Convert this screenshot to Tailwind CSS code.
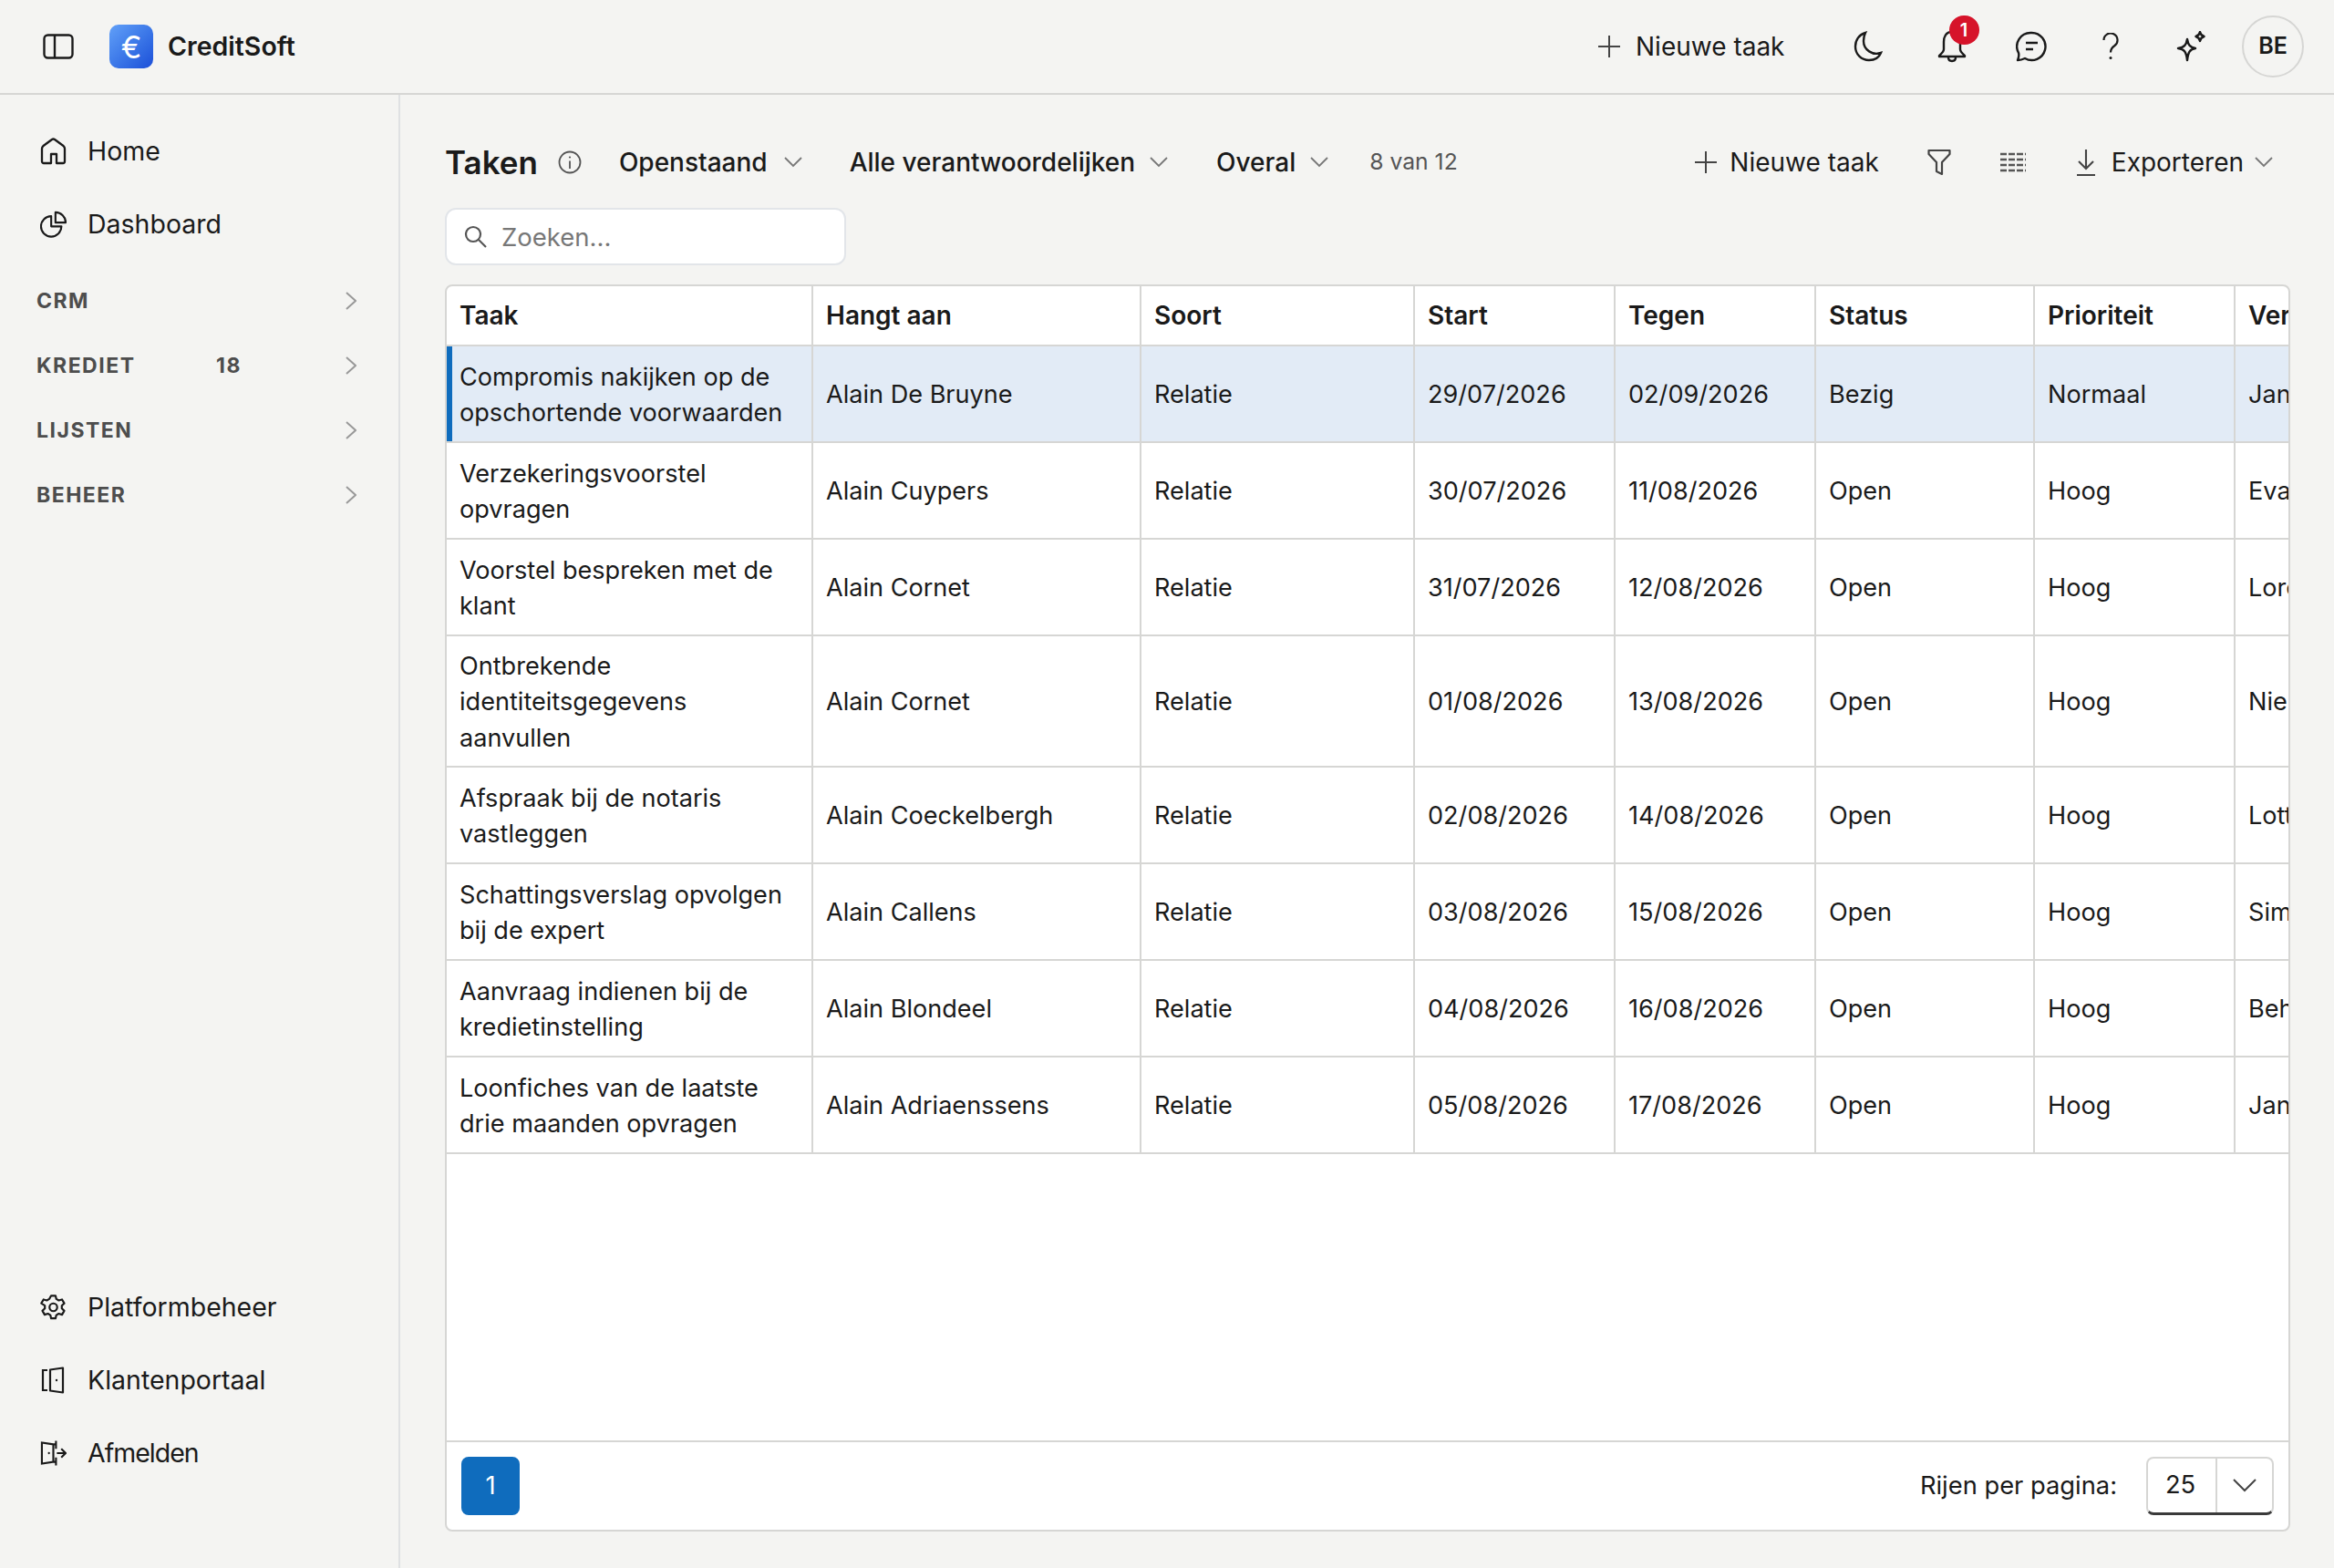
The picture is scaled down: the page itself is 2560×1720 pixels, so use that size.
<!DOCTYPE html>
<html lang="nl">
<head>
  <meta charset="UTF-8" />
  <title>CreditSoft - Taken</title>
  <script src="https://cdn.jsdelivr.net/npm/@tailwindcss/browser@4"></script>
</head>
<body class="bg-[#f4f4f2] font-['Inter',sans-serif] text-[#1a1a1a] text-[28px] w-[2560px] h-[1720px] overflow-hidden">

  <!-- topbar -->
  <header class="h-[104px] border-b-2 border-[#d6d6d4] flex items-center pl-[47px] pr-[33px]">
    <svg class="w-[34px] h-[28px]" viewBox="0 0 34 28" fill="none" stroke="#1a1a1a" stroke-width="2.4"><rect x="1.5" y="1.5" width="31" height="25" rx="4"/><path d="M13 1.5v25"/></svg>
    <div class="ml-[39px] w-[48px] h-[48px] rounded-[10px] bg-gradient-to-br from-[#62a0f8] to-[#1d4ed8] flex items-center justify-center text-white text-[34px] font-normal">€</div>
    <span class="ml-[16px] text-[28.500px] font-semibold">CreditSoft</span>
    <div class="ml-auto flex items-center">
      <svg class="w-[26px] h-[26px] text-[#444]" viewBox="0 0 26 26" fill="none" stroke="currentColor" stroke-width="2"><path d="M13 1v24M1 13h24"/></svg>
      <span class="ml-[16px]">Nieuwe taak</span>
      <svg class="ml-[75.500px] w-[32px] h-[36px]" viewBox="0 0 32 36" fill="none" stroke="#1a1a1a" stroke-width="2.4"><path d="M13 3C6 5 2 11 2 18c0 9 7 15 15 15 6 0 11-3 13-8-9 3-19-3-19-13 0-4 1-7 2-9z"/></svg>
      <div class="ml-[59.500px] relative w-[32px] h-[36px]">
        <svg class="w-[32px] h-[36px]" viewBox="0 0 32 36" fill="none" stroke="#1a1a1a" stroke-width="2.4" stroke-linejoin="round"><path d="M16 2C9 2 7 8 7 13v8c0 3-3 5-5 7v1h28v-1c-2-2-5-4-5-7v-8c0-5-2-11-9-11z"/><path d="M12 30c0 3 2 4 4 4s4-1 4-4"/></svg>
        <span class="absolute left-[13px] top-[-16px] w-[33px] h-[32px] rounded-full bg-[#d6132a] text-white text-[20px] font-semibold flex items-center justify-center">1</span>
      </div>
      <svg class="ml-[54.500px] w-[34px] h-[34px]" viewBox="0 0 34 34" fill="none" stroke="#1a1a1a" stroke-width="2.4"><path d="M17 2a15 15 0 1 1-7 28c-2 1-5 2-8 2 1-3 2-5 1-8A15 15 0 0 1 17 2z" stroke-linejoin="round"/><path d="M11 13h13M11 20h8" stroke-width="2.6"/></svg>
      <svg class="ml-[61px] w-[18px] h-[30px]" viewBox="0 0 18 30" fill="none" stroke="#1a1a1a" stroke-width="2.2"><path d="M1.500 8a7.500 7.500 0 1 1 12 6c-3 2-4.500 3.500-4.500 7.500"/><circle cx="9" cy="27.500" r="1.500" fill="#1a1a1a" stroke="none"/></svg>
      <svg class="ml-[62px] w-[34px] h-[34px]" viewBox="0 0 34 34" fill="none" stroke="#1a1a1a" stroke-width="2.4" stroke-linejoin="round"><path d="M13 9c1 6 3 9 9 10-6 1-8 4-9 13-1-9-3-12-10-13 7-1 9-4 10-10z"/><path d="M27 1c.5 3 1.500 4 4.500 5-3 1-4 2-4.500 5-.5-3-1.500-4-4.500-5 3-1 4-2 4.500-5z"/></svg>
      <div class="ml-[39px] w-[68px] h-[68px] rounded-full border-2 border-[#d6d6d4] flex items-center justify-center text-[25px] font-semibold">BE</div>
    </div>
  </header>

  <div class="flex h-[1616px]">
    <!-- sidebar -->
    <aside class="w-[439px] shrink-0 border-r-2 border-[#dfe1e3] flex flex-col justify-between pl-[44px] pr-[48px] pt-[38px] pb-[102px] text-[28.500px]">
      <nav>
        <a class="flex items-center h-[48px] mb-[32px] gap-[23px]">
          <svg class="w-[29px] h-[30px]" viewBox="0 0 29 30" fill="none" stroke="#1a1a1a" stroke-width="2.300" stroke-linejoin="round"><path d="M2 12c0-1 .5-2 1.500-3L13 2c1-.7 2-.7 3 0l9.500 7c1 1 1.500 2 1.500 3v14c0 1-1 2-2 2h-7V18h-6v10H4c-1 0-2-1-2-2z"/></svg>
          <span>Home</span>
        </a>
        <a class="flex items-center h-[48px] gap-[23px]">
          <svg class="w-[29px] h-[30px]" viewBox="0 0 31 31" fill="none" stroke="#1a1a1a" stroke-width="2.300" stroke-linejoin="round"><path d="M13 6a12 12 0 1 0 12 12H13z"/><path d="M18 1.500a12 12 0 0 1 12 12H18z"/></svg>
          <span>Dashboard</span>
        </a>
        <div class="mt-[40px] -ml-[4px] -mr-[2px] text-[23px] font-bold tracking-[1.500px] text-[#4d4d4d]">
          <div class="flex items-center h-[40px] mb-[31px]"><span>CRM</span><svg class="ml-auto w-[12px] h-[20px]" viewBox="0 0 12 20" fill="none" stroke="#999" stroke-width="2"><path d="m1 1 10 9-10 9"/></svg></div>
          <div class="flex items-center h-[40px] mb-[31px]"><span class="w-[197px]">KREDIET</span><span>18</span><svg class="ml-auto w-[12px] h-[20px]" viewBox="0 0 12 20" fill="none" stroke="#999" stroke-width="2"><path d="m1 1 10 9-10 9"/></svg></div>
          <div class="flex items-center h-[40px] mb-[31px]"><span>LIJSTEN</span><svg class="ml-auto w-[12px] h-[20px]" viewBox="0 0 12 20" fill="none" stroke="#999" stroke-width="2"><path d="m1 1 10 9-10 9"/></svg></div>
          <div class="flex items-center h-[40px]"><span>BEHEER</span><svg class="ml-auto w-[12px] h-[20px]" viewBox="0 0 12 20" fill="none" stroke="#999" stroke-width="2"><path d="m1 1 10 9-10 9"/></svg></div>
        </div>
      </nav>
      <nav>
        <a class="flex items-center h-[48px] mb-[32px] gap-[23px]">
          <svg class="w-[29px] h-[30px]" viewBox="0 0 24 24" fill="none" stroke="#1a1a1a" stroke-width="1.800" stroke-linejoin="round"><path d="M10 1.500h4l.7 3 2.200 1.300 3-.9 2 3.500-2.200 2.100v2.600l2.200 2.100-2 3.500-3-.9-2.200 1.300-.7 3h-4l-.7-3-2.200-1.300-3 .9-2-3.500 2.200-2.100v-2.600L1.100 8.400l2-3.500 3 .9 2.200-1.300z"/><circle cx="12" cy="12" r="3.500"/></svg>
          <span>Platformbeheer</span>
        </a>
        <a class="flex items-center h-[48px] mb-[32px] gap-[23px]">
          <svg class="w-[29px] h-[30px]" viewBox="0 0 29 30" fill="none" stroke="#1a1a1a" stroke-width="2.200"><path d="M8 4H3v22h5"/><path d="M11 3.500 25 1.500v27L11 26.500z" stroke-linejoin="round"/><circle cx="18" cy="15" r="1.200" fill="#1a1a1a" stroke="none"/></svg>
          <span>Klantenportaal</span>
        </a>
        <a class="flex items-center h-[48px] gap-[23px]">
          <svg class="w-[29px] h-[30px]" viewBox="0 0 30 30" fill="none" stroke="#1a1a1a" stroke-width="2.200"><path d="M15 5 2 3v24l13-2zM15 5h3M15 25h3M18 1v9M18 20v9"/><path d="M19 15h10M24 10l5 5-5 5"/><circle cx="10" cy="15" r="1.200" fill="#1a1a1a" stroke="none"/></svg>
          <span class="tracking-[-1px]">Afmelden</span>
        </a>
      </nav>
    </aside>

    <!-- content -->
    <main class="flex-1 min-w-0 pl-[49px] pr-[48px] pt-[43px]">
      <div class="flex items-center h-[62px]">
        <h1 class="text-[35px] font-semibold">Taken</h1>
        <svg class="ml-[22px] w-[26px] h-[26px]" viewBox="0 0 26 26" fill="none" stroke="#555" stroke-width="1.800"><circle cx="13" cy="13" r="11.500"/><path d="M13 11.500V20"/><circle cx="13" cy="7.500" r="1.100" fill="#555" stroke="none"/></svg>
        <span class="ml-[41px] font-medium">Openstaand</span>
        <svg class="ml-[18px] w-[20px] h-[12px]" viewBox="0 0 20 12" fill="none" stroke="#777" stroke-width="1.800"><path d="m1 1 9 9 9-9"/></svg>
        <span class="ml-[52px] font-medium">Alle verantwoordelijken</span>
        <svg class="ml-[16px] w-[20px] h-[12px]" viewBox="0 0 20 12" fill="none" stroke="#777" stroke-width="1.800"><path d="m1 1 9 9 9-9"/></svg>
        <span class="ml-[53px] font-medium">Overal</span>
        <svg class="ml-[16px] w-[20px] h-[12px]" viewBox="0 0 20 12" fill="none" stroke="#777" stroke-width="1.800"><path d="m1 1 9 9 9-9"/></svg>
        <span class="ml-[45px] text-[24.700px] text-[#555]">8 van 12</span>
        <div class="ml-auto flex items-center">
          <svg class="w-[26px] h-[26px] text-[#444]" viewBox="0 0 26 26" fill="none" stroke="currentColor" stroke-width="2"><path d="M13 1v24M1 13h24"/></svg>
          <span class="ml-[13px]">Nieuwe taak</span>
          <svg class="ml-[53px] w-[26px] h-[30px]" viewBox="0 0 26 30" fill="none" stroke="#444" stroke-width="2.200" stroke-linejoin="round"><path d="M1.500 2h23v4L16 15v13l-6-3V15L1.500 6z"/></svg>
          <svg class="ml-[54px] w-[28px] h-[24px]" viewBox="0 0 28 24" fill="none" stroke="#555" stroke-width="2.400" stroke-dasharray="7 2"><path d="M0 3h28M0 9h28M0 15h28M0 21h28"/></svg>
          <svg class="ml-[55px] w-[22px] h-[30px]" viewBox="0 0 22 30" fill="none" stroke="#444" stroke-width="2.100"><path d="M11 1v21M3 14l8 8 8-8M1 29h20"/></svg>
          <span class="ml-[17px]">Exporteren</span>
          <svg class="ml-[12px] w-[20px] h-[12px]" viewBox="0 0 20 12" fill="none" stroke="#777" stroke-width="1.800"><path d="m1 1 9 9 9-9"/></svg>
          <span class="w-[19px]"></span>
        </div>
      </div>

      <div class="mt-[19px] w-[440px] h-[63px] bg-white border-2 border-[#e2e5e9] rounded-[12px] flex items-center pl-[19px]">
        <svg class="w-[25px] h-[25px]" viewBox="0 0 25 25" fill="none" stroke="#555" stroke-width="2.200"><circle cx="10" cy="10" r="8"/><path d="m16 16 8 8"/></svg>
        <span class="ml-[16px] pt-[2px] text-[27.500px] text-[#777]">Zoeken...</span>
      </div>

      <!-- table card -->
      <div class="mt-[21px] h-[1368px] bg-white border-2 border-[#d6d6d4] rounded-[8px] flex flex-col overflow-hidden">
        <div class="flex-1 overflow-hidden">
          <table class="table-fixed border-separate border-spacing-0 w-[2320px] text-[27.100px] leading-[39.500px]">
            <colgroup>
              <col class="w-[402px]" /><col class="w-[360px]" /><col class="w-[300px]" /><col class="w-[220px]" />
              <col class="w-[220px]" /><col class="w-[240px]" /><col class="w-[220px]" /><col class="w-[358px]" />
            </colgroup>
            <thead>
              <tr class="h-[66px] text-[28px] text-left">
                <th class="pl-[14px] pt-[2px] font-semibold border-r-2 border-b-2 border-[#d6d6d4]">Taak</th>
                <th class="pl-[14px] pt-[2px] font-semibold border-r-2 border-b-2 border-[#d6d6d4]">Hangt aan</th>
                <th class="pl-[14px] pt-[2px] font-semibold border-r-2 border-b-2 border-[#d6d6d4]">Soort</th>
                <th class="pl-[14px] pt-[2px] font-semibold border-r-2 border-b-2 border-[#d6d6d4]">Start</th>
                <th class="pl-[14px] pt-[2px] font-semibold border-r-2 border-b-2 border-[#d6d6d4]">Tegen</th>
                <th class="pl-[14px] pt-[2px] font-semibold border-r-2 border-b-2 border-[#d6d6d4]">Status</th>
                <th class="pl-[14px] pt-[2px] font-semibold border-r-2 border-b-2 border-[#d6d6d4]">Prioriteit</th>
                <th class="pl-[14px] pt-[2px] font-semibold border-b-2 border-[#d6d6d4]">Verantwoordelijke</th>
              </tr>
            </thead>
            <tbody id="rows"></tbody>
          </table>
        </div>
        <div class="h-[98px] shrink-0 border-t-2 border-[#d6d6d4] flex items-center pl-[16px] pr-[16px] text-[27.300px]">
          <button class="w-[64px] h-[64px] rounded-[8px] bg-[#0f6cbd] text-white">1</button>
          <span class="ml-auto">Rijen per pagina:</span>
          <div class="ml-[32px] w-[140px] h-[64px] flex border-2 border-b-[3px] border-[#d6d6d4] border-b-[#3a3a3a] rounded-[8px]">
            <span class="w-[76px] pr-[3px] flex items-center justify-center border-r-2 border-[#d6d6d4]">25</span>
            <span class="flex-1 flex items-center justify-center">
              <svg class="w-[26px] h-[15px]" viewBox="0 0 26 15" fill="none" stroke="#444" stroke-width="2"><path d="m1 1 12 12L25 1"/></svg>
            </span>
          </div>
        </div>
      </div>
    </main>
  </div>

  <script>
    const taken = [
      ['Compromis nakijken op de opschortende voorwaarden', 'Alain De Bruyne', '29/07/2026', '02/09/2026', 'Bezig', 'Normaal', 'Jan Peeters'],
      ['Verzekeringsvoorstel opvragen', 'Alain Cuypers', '30/07/2026', '11/08/2026', 'Open', 'Hoog', 'Eva Maes'],
      ['Voorstel bespreken met de klant', 'Alain Cornet', '31/07/2026', '12/08/2026', 'Open', 'Hoog', 'Lore Claes'],
      ['Ontbrekende identiteitsgegevens aanvullen', 'Alain Cornet', '01/08/2026', '13/08/2026', 'Open', 'Hoog', 'Niels Wouters'],
      ['Afspraak bij de notaris vastleggen', 'Alain Coeckelbergh', '02/08/2026', '14/08/2026', 'Open', 'Hoog', 'Lotte Jacobs'],
      ['Schattingsverslag opvolgen bij de expert', 'Alain Callens', '03/08/2026', '15/08/2026', 'Open', 'Hoog', 'Simon Mertens'],
      ['Aanvraag indienen bij de kredietinstelling', 'Alain Blondeel', '04/08/2026', '16/08/2026', 'Open', 'Hoog', 'Beheerder'],
      ['Loonfiches van de laatste drie maanden opvragen', 'Alain Adriaenssens', '05/08/2026', '17/08/2026', 'Open', 'Hoog', 'Jan Peeters']
    ];
    const cel = 'pl-[14px] pr-[14px] pt-[2px] border-r-2 border-b-2 border-[#d6d6d4]';
    document.getElementById('rows').innerHTML = taken.map((t, i) => `
      <tr class="${i === 3 ? 'h-[144px]' : 'h-[106px]'} ${i === 0 ? 'bg-[#e2ebf6]' : ''}">
        <td class="${cel} ${i === 0 ? 'shadow-[inset_6px_0_0_#0f6cbd]' : ''}">${t[0]}</td>
        <td class="${cel}">${t[1]}</td>
        <td class="${cel}">Relatie</td>
        <td class="${cel}">${t[2]}</td>
        <td class="${cel}">${t[3]}</td>
        <td class="${cel}">${t[4]}</td>
        <td class="${cel}">${t[5]}</td>
        <td class="pl-[14px] pt-[2px] border-b-2 border-[#d6d6d4]">${t[6]}</td>
      </tr>`).join('');
  </script>
</body>
</html>
